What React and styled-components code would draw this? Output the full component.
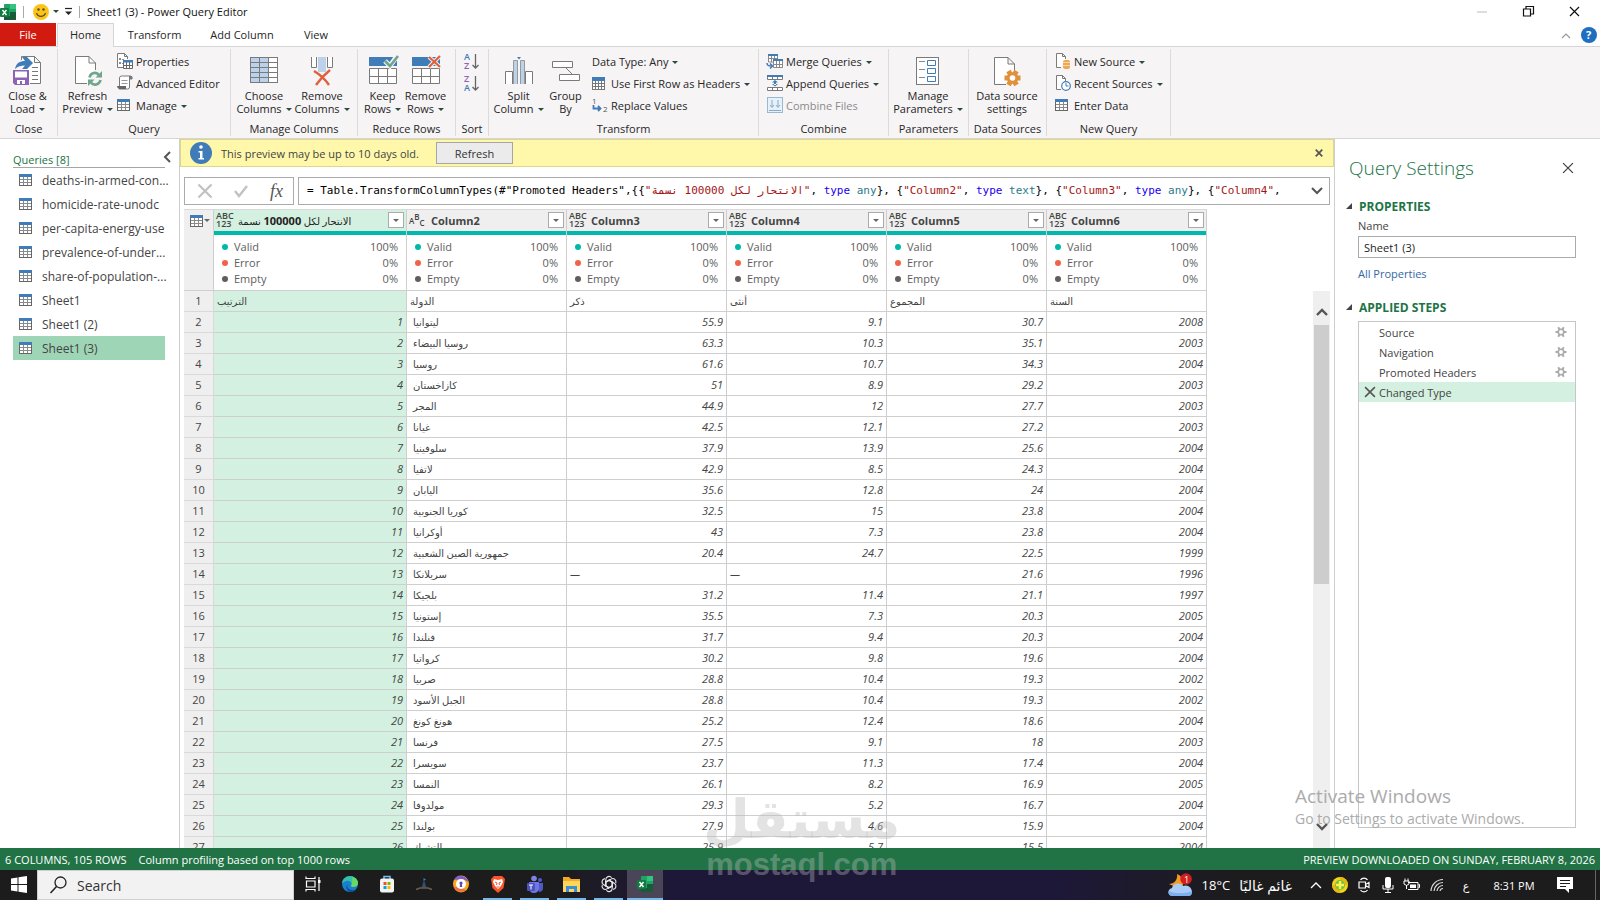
import React from "react";
import styled, { createGlobalStyle, css } from "styled-components";

const Global = createGlobalStyle`
  *, *::before, *::after { box-sizing: border-box; }
  body { margin: 0; }
  body, button, input, table {
    font-family: "Open Sans", "Noto Sans", "DejaVu Sans", sans-serif;
    font-size: 11px;
    color: #262626;
  }
  button { border: 0; padding: 0; background: none; cursor: pointer; white-space: nowrap; }
  svg { display: block; flex: none; overflow: visible; }
  ul, ol { list-style: none; margin: 0; padding: 0; }
`;

/* ---------- frame ---------- */
const Screen = styled.div`
  height: 100vh;
  display: flex;
  flex-direction: column;
  overflow: hidden;
  background: #fff;
`;
const TitleBar = styled.header`
  height: 23px;
  flex: none;
  display: flex;
  align-items: center;
`;
const AppTitle = styled.h1`
  margin: 0;
  padding-left: 7px;
  font-size: 11px;
  font-weight: 400;
  color: #111;
`;
const TitleRule = styled.span`
  width: 1px;
  height: 12px;
  background: #a8a8a8;
  margin: 0 ${(p) => p.$right || 0}px 0 ${(p) => p.$left || 0}px;
`;
const WindowButtons = styled.div`
  margin-left: auto;
  padding-right: 3px;
  display: flex;
`;
const WindowButton = styled.button`
  width: 46px;
  height: 21px;
  display: grid;
  place-items: center;
`;

/* ---------- ribbon ---------- */
const Tabs = styled.nav`
  height: 24px;
  flex: none;
  display: flex;
  margin-bottom: -1px;
  z-index: 1;
`;
const Tab = styled.button`
  width: ${(p) => p.$width}px;
  height: 23px;
  font-size: 11px;
  ${(p) => p.$kind === "file" && css`background: #d11a10; color: #fff; margin-right: 1px;`}
  ${(p) => p.$kind === "active" && css`
    height: 24px;
    padding-bottom: 2px;
    background: #f6f4f5;
    border: 1px solid #d6d4d5;
    border-bottom: 0;
  `}
`;
const TabTools = styled.div`
  margin-left: auto;
  padding-right: 3px;
  display: flex;
  align-items: center;
  gap: 10px;
`;
const Ribbon = styled.section`
  height: 93px;
  flex: none;
  display: flex;
  padding-top: 2px;
  background: #f6f4f5;
  border-top: 1px solid #d6d4d5;
  border-bottom: 1px solid #d6d4d5;
`;
const GroupBox = styled.div`
  width: ${(p) => p.$width}px;
  height: 87px;
  flex: none;
  display: flex;
  flex-direction: column;
  border-right: 1px solid #dcdadb;
`;
const GroupBody = styled.div`
  height: 71px;
  flex: none;
  display: flex;
  padding-left: ${(p) => p.$pad || 0}px;
`;
const GroupLabel = styled.div`
  line-height: 17px;
  text-align: center;
  white-space: nowrap;
`;
const BigButton = styled.button`
  width: ${(p) => p.$width}px;
  padding-top: 5px;
  display: flex;
  flex-direction: column;
  align-items: center;
  gap: 3px;
  line-height: 13px;
`;
const SmallColumn = styled.div`
  display: flex;
  flex-direction: column;
  padding: 1px 0 0 3px;
`;
const SmallButton = styled.button`
  height: 22px;
  display: flex;
  align-items: center;
  gap: 3px;
  color: ${(p) => (p.disabled ? "#8c8a8b" : "#262626")};
`;
const Slot = styled.span`
  width: ${(p) => p.$width || 16}px;
`;
const Caret = styled.span`
  display: inline-block;
  vertical-align: middle;
  margin: 0 0 1px 4px;
  border: 3px solid transparent;
  border-top-color: #2b4a43;
  border-bottom: 0;
`;

/* ---------- panes ---------- */
const Workspace = styled.div`
  flex: 1;
  min-height: 0;
  display: flex;
`;
const QueriesPane = styled.aside`
  width: 180px;
  flex: none;
  padding: 10px 14px 0 13px;
  border-right: 1px solid #cfcfcf;
`;
const QueriesHead = styled.div`
  height: 19px;
  display: flex;
  justify-content: space-between;
  border-bottom: 1px solid #a6a6a6;
  color: #217346;
  line-height: 21px;
`;
const CollapseButton = styled.button`
  height: 16px;
  margin-right: -6px;
`;
const QueryItem = styled.button`
  width: 100%;
  height: 24px;
  padding-left: 6px;
  display: flex;
  align-items: center;
  gap: 10px;
  color: #444;
  font-size: 12px;
  background: ${(p) => (p.$active ? "#9fd5b7" : "transparent")};
`;
const Center = styled.main`
  flex: 1;
  min-width: 0;
  display: flex;
  flex-direction: column;
`;
const Banner = styled.div`
  height: 28px;
  flex: none;
  display: flex;
  align-items: center;
  padding: 0 10px 0 9px;
  background: #fff8ab;
  border: 1px solid #dbd78e;
  color: #444;
  white-space: nowrap;
`;
const BannerText = styled.span`
  min-width: 206px;
  margin: 0 9px;
`;
const RefreshButton = styled.button`
  width: 77px;
  height: 22px;
  background: #ebebeb;
  border: 1px solid #a6a6a6;
  color: #333;
`;
const BannerClose = styled.button`
  margin-left: auto;
`;
const FormulaRow = styled.div`
  flex: none;
  display: flex;
  gap: 4px;
  padding: 10px 4px 4px 4px;
`;
const FormulaTools = styled.div`
  width: 110px;
  height: 28px;
  display: flex;
  align-items: center;
  justify-content: space-between;
  padding: 0 10px 0 12px;
  border: 1px solid #ababab;
`;
const FxButton = styled.button`
  font: italic 18px/20px "Liberation Serif", serif;
  color: #555;
`;
const FormulaBox = styled.div`
  flex: 1;
  min-width: 0;
  height: 28px;
  display: flex;
  align-items: center;
  justify-content: space-between;
  padding: 0 6px 0 8px;
  border: 1px solid #ababab;
`;
const Code = styled.code`
  font: 11px/18px "DejaVu Sans Mono", "Liberation Mono", monospace;
  color: #000;
  white-space: pre;
  overflow: hidden;
`;
const Token = styled.span`
  color: ${(p) => ({ str: "#a31515", key: "#1a00f0", type: "#2b7a8c" })[p.$kind]};
`;

/* ---------- data grid ---------- */
const GridArea = styled.div`
  flex: 1;
  min-height: 0;
  display: flex;
  justify-content: space-between;
  padding: 0 4px;
`;
const GridClip = styled.div`
  overflow: hidden;
`;
const Grid = styled.table`
  width: 1023px;
  table-layout: fixed;
  border-collapse: separate;
  border-spacing: 0;
  color: #444;
`;
const HeadCell = styled.th`
  height: 22px;
  padding: 0;
  background: ${(p) => (p.$selected ? "#d4f0e1" : "#efefef")};
  border-top: 1px solid #d9d9d9;
  border-right: 1px solid #cfcfcf;
`;
const HeadInner = styled.div`
  display: flex;
  align-items: center;
  height: 21px;
  padding: 0 2px ${(p) => (p.$corner ? 0 : 1)}px ${(p) => (p.$corner ? 5 : 2)}px;
  gap: ${(p) => (p.$corner ? 1 : 5)}px;
  font-weight: 700;
  white-space: nowrap;
`;
const TypeTag = styled.span`
  width: 17px;
  flex: none;
  font-size: 9px;
  line-height: 8px;
  font-weight: 600;
  text-align: left;
`;
const TextTag = styled(TypeTag)`
  display: flex;
  font-size: 8px;
`;
const Letter = styled.span`
  padding: ${(p) => p.$drop}px 0 ${(p) => 8 - p.$drop}px;
`;
const ArabicTitle = styled.bdi`
  font-size: 10px;
  font-weight: 400;
  color: #222;
  b { font-size: 11px; }
`;
const FilterButton = styled.button`
  width: 16px;
  height: 16px;
  margin-left: auto;
  display: grid;
  place-items: center;
  background: #fff;
  border: 1px solid #ababab;
`;
const FilterCaret = styled.span`
  border: 3px solid transparent;
  border-top-color: #666;
  border-bottom: 0;
`;
const ProfileCell = styled.td`
  height: 60px;
  padding: 0;
  vertical-align: top;
  background: ${(p) => (p.$corner ? "#efefef" : "#fff")};
  border-right: 1px solid #cfcfcf;
  border-bottom: 1px solid #cfcfcf;
`;
const QualityBar = styled.div`
  height: 4px;
  background: #01b8aa;
`;
const Stats = styled.dl`
  margin: 0;
  padding: 4px 8px 0 8px;
`;
const Stat = styled.div`
  height: 16px;
  display: flex;
  align-items: center;
  line-height: 16px;
  color: #605e5c;
`;
const Dot = styled.span`
  width: 6px;
  height: 6px;
  border-radius: 50%;
  margin-right: 6px;
  background: ${(p) => p.$color};
`;
const StatName = styled.dt``;
const StatValue = styled.dd`
  margin: 0 0 0 auto;
`;
const RowNumber = styled.th`
  height: 21px;
  padding: 0;
  line-height: 20px;
  font-weight: 400;
  text-align: center;
  background: #efefef;
  border-right: 1px solid #d9d9d9;
  border-bottom: 1px solid #d9d9d9;
`;
const Cell = styled.td`
  height: 21px;
  line-height: 20px;
  padding: 0 3px 0 ${(p) => (p.$indent ? 6 : 3)}px;
  text-align: ${(p) => (p.$num ? "right" : "left")};
  font-style: ${(p) => (p.$num ? "italic" : "normal")};
  font-size: ${(p) => (p.$num ? 11 : 10)}px;
  background: ${(p) => (p.$selected ? "#d4f0e1" : "#fff")};
  border-right: 1px solid #cfcfcf;
  border-bottom: 1px solid #cfcfcf;
  white-space: nowrap;
`;
const Scroll = styled.div`
  width: 17px;
  margin-top: 82px;
  display: flex;
  flex-direction: column;
  align-items: center;
  background: #efefef;
`;
const ScrollButton = styled.button`
  height: 34px;
  padding: ${(p) => (p.$down ? "0 0 8px" : "8px 0 0")};
  display: grid;
  place-items: center;
`;
const Track = styled.div`
  flex: 1;
  width: 15px;
`;
const Thumb = styled.div`
  height: 53%;
  background: #cdcdcd;
`;

/* ---------- settings ---------- */
const Settings = styled.aside`
  width: 266px;
  flex: none;
  display: flex;
  flex-direction: column;
  padding: 15px 24px 20px 11px;
  border-left: 1px solid #cfcfcf;
`;
const SettingsHead = styled.div`
  display: flex;
  align-items: center;
  justify-content: space-between;
  padding: 0 2px 0 3px;
  height: 28px;
`;
const SettingsTitle = styled.h2`
  margin: 0;
  font-size: 19px;
  font-weight: 300;
  color: #217346;
`;
const SectionHead = styled.h3`
  margin: ${(p) => p.$top}px 0 0;
  height: 20px;
  display: flex;
  align-items: center;
  gap: 7px;
  font-size: 12px;
  font-weight: 700;
  color: #217346;
`;
const SectionBody = styled.div`
  margin-left: 12px;
  display: flex;
  flex-direction: column;
  align-items: flex-start;
  flex: ${(p) => (p.$grow ? 1 : "none")};
`;
const FieldLabel = styled.label`
  height: 20px;
  line-height: 20px;
  color: #444;
`;
const NameInput = styled.input`
  width: 100%;
  height: 22px;
  padding: 0 5px;
  border: 1px solid #ababab;
  color: #222;
`;
const PropsLink = styled.a`
  margin-top: 6px;
  line-height: 20px;
  color: #3467a5;
  text-decoration: none;
`;
const Steps = styled.ol`
  width: 100%;
  flex: 1;
  margin-top: 4px;
  border: 1px solid #c6c6c6;
`;
const Step = styled.li`
  height: 20px;
  display: flex;
  align-items: center;
  padding: 0 8px 0 5px;
  color: #444;
  background: ${(p) => (p.$active ? "#d4f0e1" : "transparent")};
`;
const StepMark = styled.span`
  width: 15px;
`;
const StepGear = styled.button`
  margin-left: auto;
`;

/* ---------- status and task bars ---------- */
const StatusBar = styled.footer`
  height: 22px;
  flex: none;
  display: flex;
  align-items: center;
  gap: 12px;
  padding: 0 5px;
  background: #217346;
  color: #fff;
  white-space: nowrap;
`;
const StatusEnd = styled.span`
  margin-left: auto;
`;
const TaskBar = styled.nav`
  height: 30px;
  flex: none;
  display: flex;
  align-items: stretch;
  background: linear-gradient(90deg, #1c1c1c 0 34%, #1d1a28 38%, #1e1838 42% 66%, #1c1b22 75%, #1c1c1c 78%);
  color: #fff;
`;
const TaskButton = styled.button`
  width: ${(p) => p.$width || 29}px;
  margin: 0 ${(p) => (p.$width ? 0 : 4)}px;
  display: grid;
  place-items: center;
  border-bottom: 2px solid ${(p) => (p.$open ? "#76b9ed" : "transparent")};
  background: ${(p) => (p.$active ? "#4a4658" : "transparent")};
  background-clip: padding-box;
`;
const SearchBox = styled.label`
  width: 257px;
  display: flex;
  align-items: center;
  gap: 10px;
  padding-left: 12px;
  background: #f2f2f2;
  border: 1px solid #cfcfcf;
`;
const SearchInput = styled.input`
  width: 180px;
  border: 0;
  padding: 0;
  background: none;
  font-size: 14px;
  &::placeholder { color: #333; opacity: 1; }
`;
const Tray = styled.div`
  margin-left: auto;
  display: flex;
  align-items: center;
`;
const Weather = styled.button`
  display: flex;
  align-items: center;
  gap: 9px;
  margin-right: 12px;
  color: #fff;
  font-size: 13px;
`;
const WeatherText = styled.bdi`
  font-size: 14px;
`;
const TrayItem = styled.button`
  width: ${(p) => p.$width || 24}px;
  height: 30px;
  display: grid;
  place-items: center;
  color: #fff;
`;
const ShowDesktop = styled.span`
  width: 5px;
  height: 30px;
  margin-left: 12px;
  border-left: 1px solid #666;
`;

/* ---------- overlays ---------- */
const Activate = styled.div`
  position: absolute;
  right: 0;
  bottom: 71px;
  width: 305px;
  color: #ababab;
  font-size: 14px;
  line-height: 20px;
  pointer-events: none;
`;
const ActivateTitle = styled.div`
  font-size: 19px;
  line-height: 25px;
`;
const Mark = styled.div`
  position: absolute;
  left: 703px;
  bottom: 18px;
  color: rgba(185, 185, 185, 0.4);
  font: 700 31px/34px "Liberation Sans", sans-serif;
  text-align: center;
  pointer-events: none;
`;
const MarkArabic = styled.div`
  font: 700 54px/56px "DejaVu Sans", sans-serif;
`;

/* ---------- icons ---------- */
const BLUE = "#3f7cb8";
const GREY = "#7a7a7a";

const TableIcon = ({ w = 13, h = 12 }) => (
  <svg width={w} height={h} viewBox="0 0 13 12" shapeRendering="crispEdges">
    <rect x="0" y="0" width="13" height="12" fill="#fff" />
    <path d="M0.5 3v8.5h12V3M4.5 3v8M8.5 3v8M1 5.5h11M1 8.5h11" stroke="#8a8a8a" fill="none" />
    <path d="M0.5 3v8.5h12V3" stroke="#666" fill="none" />
    <rect width="13" height="3" fill={BLUE} />
  </svg>
);
const CloseLoadIcon = () => (
  <svg width="30" height="32" viewBox="0 0 30 32">
    <path d="M9 3h12.500v6.500H28V29H9z" fill="#fff" />
    <path d="M8.500 6V2.500h13l6 6v21H17M21.500 2.500v6h6M19 13.500h6M19 17.500h6M19 21.500h6M19 25.500h6" stroke={GREY} fill="none" />
    <path d="M2 15c1-6 5-8 10-8L9 3h5l6 6-6 6H9l3-3.500c-4 0-7 .500-10 3.500z" fill={BLUE} />
    <path d="M0 16h16v15H2l-2-2z" fill="#8e63b3" />
    <path d="M2 17.500h12v6H2zM4 26h8v4h-3v-3H7v3H4z" fill="#fff" />
  </svg>
);
const RefreshIcon = () => (
  <svg width="28" height="32" viewBox="0 0 28 32">
    <path d="M13 29.500H1.500V2.500H15l6.500 6.500v7" stroke={GREY} fill="#fff" />
    <path d="M15 2.500V9h6.500" stroke={GREY} fill="none" />
    <g fill="none" stroke="#6fa58c" strokeWidth="2.600">
      <path d="M15.500 23.500c1-5 7-6 9.500-2.500M26.500 26c-1 5-7 6-9.500 2.500" />
    </g>
    <path d="M28 17v6.500h-6.500zM14 32v-6.500h6.500z" fill="#6fa58c" />
  </svg>
);
const PropsIcon = () => (
  <svg width="16" height="16" viewBox="0 0 16 16">
    <path d="M6 14.500H.5V.500h7l3 3V6M7.500.500v3h3" stroke={GREY} fill="#fff" />
    <path d="M2 5h2v2H2zM2 9h2v2H2z" fill="#888" /><path d="M5 6.500h2M5 10.500h1" stroke="#888" />
    <rect x="6" y="7" width="10" height="9" fill="#fff" />
    <path d="M6.500 8v7.500h9V8M9.500 9v6M12.500 9v6M7 12.500h9" stroke="#666" fill="none" />
    <rect x="6" y="7" width="10" height="2.500" fill={BLUE} />
  </svg>
);
const ScrollIcon = () => (
  <svg width="16" height="16" viewBox="0 0 16 16">
    <path d="M2.500 11V3q0-2 2-2h9q2 0 1.500 3h-2.500v8q0 2-2 2H2" stroke={GREY} fill="#fff" />
    <path d="M4.500 5.500h6M4.500 8.500h6" stroke="#999" /><path d="M0 11h9v3H2q-2-1-2-3z" fill="#666" /><path d="M12 1h2.500q1.500 1 .500 3H12z" fill="#777" />
  </svg>
);
const ChooseColumnsIcon = () => (
  <svg width="28" height="32" viewBox="0 0 28 32" shapeRendering="crispEdges">
    <rect x="0" y="3" width="28" height="26" fill="#fff" />
    <rect x="0" y="3" width="19" height="26" fill="#bcd2ea" />
    <path d="M.5 3.500h27v25H.5zM9.500 4v24M18.500 4v24M1 8.500h26M1 13.500h26M1 18.500h26M1 23.500h26" stroke={GREY} fill="none" />
  </svg>
);
const RemoveColumnsIcon = () => (
  <svg width="24" height="32" viewBox="0 0 24 32">
    <rect x="8" y="3" width="8" height="15" fill="#bcd2ea" />
    <path d="M1.500 3v10.500h5V3M22.500 3v10.500h-5V3" stroke={GREY} fill="#fff" />
    <path d="M4 17c5 3 11 8 15 14M20 16c-5 4-9 8-14 15" stroke="#e0603c" strokeWidth="2.400" fill="none" />
  </svg>
);
const RowsIcon = ({ remove }) => (
  <svg width="28" height="32" viewBox="0 0 28 32">
    <rect x="0" y="3" width="28" height="9" fill={BLUE} />
    <path d="M.5 14.500h27v15H.5zM9.500 15v14M18.500 15v14M1 22.500h26" stroke={GREY} fill="#fff" />
    {remove ? (
      <>
        <path d="M17 3l11 10M28 2L17 13" stroke="#f6f4f5" strokeWidth="4" fill="none" />
        <path d="M17 3l11 10M28 2L17 13" stroke="#e0603c" strokeWidth="2.200" fill="none" />
      </>
    ) : (
      <>
        <path d="M16 7l5 5 7-10" stroke="#f6f4f5" strokeWidth="5" fill="none" />
        <path d="M16 7l5 5 8-10" stroke="#6fa58c" strokeWidth="2.600" fill="none" />
      </>
    )}
  </svg>
);
const SortIcon = ({ top, bottom, topColor, bottomColor }) => (
  <svg width="16" height="18" viewBox="0 0 16 18">
    <text x="0" y="8" fontSize="9" fontWeight="600" fill={topColor}>{top}</text>
    <text x="0" y="17" fontSize="9" fontWeight="600" fill={bottomColor}>{bottom}</text>
    <path d="M11.500 2v14M8.500 13l3 3 3-3" stroke="#666" strokeWidth="1.300" fill="none" />
  </svg>
);
const SplitIcon = () => (
  <svg width="28" height="32" viewBox="0 0 28 32">
    <path d="M.5 30V17.500h7V30M20.500 30V17.500h7V30" stroke={GREY} fill="#fff" />
    <path d="M8.500 30V6.500h4V30M15.500 30V6.500h4V30" stroke="#999" fill="#bcd2ea" />
    <path d="M12 3h4l-2 2.500z" fill={BLUE} />
  </svg>
);
const GroupByIcon = () => (
  <svg width="28" height="32" viewBox="0 0 28 32">
    <path d="M.5 7.500h20v6H.5zM7.500 20.500h20v6h-20z" stroke={GREY} fill="#fff" />
    <path d="M14 14l6 6" stroke={GREY} />
  </svg>
);
const HeadersIcon = () => (
  <svg width="13" height="13" viewBox="0 0 13 13" shapeRendering="crispEdges">
    <rect width="13" height="13" fill="#fff" />
    <path d="M.5.500h12v12H.5zM3.500 1v12M6.500 1v12M9.500 1v12M0 6.500h13M0 9.500h13" stroke="#777" fill="none" />
    <rect width="13" height="4" fill={BLUE} />
  </svg>
);
const ReplaceIcon = () => (
  <svg width="16" height="16" viewBox="0 0 16 16">
    <text x="0" y="7" fontSize="8" fill="#555">1</text>
    <text x="11" y="15" fontSize="8" fill="#555">2</text>
    <path d="M1.500 8v3.500H8M6 9l2.500 2.500L6 14" stroke={BLUE} strokeWidth="1.800" fill="none" />
  </svg>
);
const MergeIcon = () => (
  <svg width="16" height="16" viewBox="0 0 16 16">
    <path d="M1.500 2v7h9V2M4.500 3v6M7.500 3v6M2 5.500h9" stroke="#888" fill="#fff" /><rect x="1" y="1" width="10" height="2" fill={BLUE} />
    <path d="M6.500 7v7.500h9V7M9.500 8v6M12.500 8v6M7 11.500h9" stroke="#888" fill="#fff" /><rect x="6" y="6" width="10" height="2" fill={BLUE} />
    <path d="M0 10c0 3 2 3 5 3M3 10.500L5.500 13 3 15.500" stroke={BLUE} strokeWidth="1.500" fill="none" />
  </svg>
);
const AppendIcon = () => (
  <svg width="16" height="16" viewBox="0 0 16 16">
    <path d="M.5 1v3.500h15V1M.5 12.500h15v3H.5zM5.500 2v2M10.500 2v2M5.500 13v2M10.500 13v2" stroke={GREY} fill="#fff" />
    <rect width="16" height="2" fill={BLUE} /><path d="M5 7.500L8 5l3 2.500zM5 9l3 2.500L11 9zM7 7h2v3H7z" fill={BLUE} />
  </svg>
);
const CombineIcon = () => (
  <svg width="16" height="16" viewBox="0 0 16 16">
    <rect x=".5" y=".5" width="15" height="15" fill="#e6f1fa" stroke="#9bb8d3" />
    <path d="M5 3v7M3 8l2 2.500L7 8M11 3v7M9 8l2 2.500L13 8M2 13.500h12" stroke="#8aa9c8" fill="none" />
  </svg>
);
const ParamsIcon = () => (
  <svg width="24" height="32" viewBox="0 0 24 32">
    <rect x="0.500" y="3.500" width="22" height="27" fill="#fff" stroke={GREY} />
    <path d="M3 7.500h6M3 15.500h6M3 23.500h6" stroke="#888" />
    <path d="M11.500 6.500h8v5h-8zM11.500 14.500h8v5h-8zM11.500 22.500h8v5h-8z" stroke={BLUE} fill="#fff" />
  </svg>
);
const SourceSettingsIcon = () => (
  <svg width="28" height="32" viewBox="0 0 28 32">
    <path d="M13 30.500H1.500v-27H15l6.500 6.500v7M15 3.500V10h6.500" stroke={GREY} fill="#fff" />
    <g transform="translate(19.500 24)">
      {[0, 60, 120].map((a) => <rect key={a} x="-2.500" y="-8" width="5" height="16" fill="#e0913c" transform={`rotate(${a + 30})`} />)}
      <circle r="5.800" fill="#e0913c" /><circle r="2.800" fill="#fff" />
    </g>
  </svg>
);
const SourceIcon = ({ clock }) => (
  <svg width="16" height="16" viewBox="0 0 16 16">
    <path d="M6 14.500H1.500V.500h6l3 3V6M7.500.500v3h3" stroke={GREY} fill="#fff" />
    {clock ? (
      <g><circle cx="11" cy="11" r="4.300" fill="#fff" stroke={BLUE} strokeWidth="1.200" /><path d="M11 8v3h2.500" stroke={BLUE} fill="none" /></g>
    ) : (
      <g><rect x="8" y="7" width="7" height="9" rx="2" fill="#f0a850" /><path d="M8 9.500h7M8 12.500h7" stroke="#fbd9a8" /></g>
    )}
  </svg>
);
const Gear = () => (
  <svg width="12" height="12" viewBox="-6 -6 12 12">
    {[0, 60, 120].map((a) => <rect key={a} x="-1" y="-5.500" width="2" height="11" fill="#aaa" transform={`rotate(${a + 30})`} />)}
    <circle r="2.800" fill="#fff" stroke="#aaa" strokeWidth="1.600" />
  </svg>
);
const Chevron = ({ d, w = 12, h = 8, color = "#555", sw = 2 }) => (
  <svg width={w} height={h} viewBox={`0 0 ${w} ${h}`}><path d={d} stroke={color} strokeWidth={sw} fill="none" /></svg>
);
const Cross = ({ s = 11, sw = 1.2, color = "#444" }) => (
  <svg width={s} height={s} viewBox="0 0 11 11"><path d="M1 1l9 9M10 1l-9 9" stroke={color} strokeWidth={sw} fill="none" /></svg>
);
const ExcelIcon = () => (
  <svg width="16" height="16" viewBox="0 0 16 16">
    <rect x="4" y="0" width="12" height="16" rx="1" fill="#21a366" /><path d="M10 0h6v5h-6z" fill="#33c481" /><path d="M10 8h6v8H4v-4h6z" fill="#185c37" />
    <rect x="0" y="4" width="9" height="9" rx="1" fill="#107c41" />
    <path d="M2.500 6l4 5M6.500 6l-4 5" stroke="#fff" strokeWidth="1.400" />
  </svg>
);
const Smiley = () => (
  <svg width="16" height="16" viewBox="0 0 16 16">
    <circle cx="8" cy="8" r="8" fill="#fcc419" /><circle cx="5.500" cy="5.500" r="1.200" fill="#5b4a2a" /><circle cx="10.500" cy="5.500" r="1.200" fill="#5b4a2a" />
    <path d="M3.500 9c1.500 4.500 7.500 4.500 9 0" stroke="#5b4a2a" strokeWidth="1.200" fill="none" />
  </svg>
);

/* ---------- data ---------- */
const queries = ["deaths-in-armed-con...", "homicide-rate-unodc", "per-capita-energy-use", "prevalence-of-under...", "share-of-population-...", "Sheet1", "Sheet1 (2)", "Sheet1 (3)"];
const steps = ["Source", "Navigation", "Promoted Headers", "Changed Type"];
const columns = [
  { name: "الانتحار لكل 100000 نسمة", arabic: true },
  { name: "Column2", text: true },
  { name: "Column3" }, { name: "Column4" }, { name: "Column5" }, { name: "Column6" },
];
const stats = [["Valid", "100%", "#01b8aa"], ["Error", "0%", "#f2624b"], ["Empty", "0%", "#605e5c"]];
const rows = [
  ["ليتوانيا", "55.9", "9.1", "30.7", "2008"],
  ["روسيا البيضاء", "63.3", "10.3", "35.1", "2003"],
  ["روسيا", "61.6", "10.7", "34.3", "2004"],
  ["كازاخستان", "51", "8.9", "29.2", "2003"],
  ["المجر", "44.9", "12", "27.7", "2003"],
  ["غيانا", "42.5", "12.1", "27.2", "2003"],
  ["سلوفينيا", "37.9", "13.9", "25.6", "2004"],
  ["لاتفيا", "42.9", "8.5", "24.3", "2004"],
  ["اليابان", "35.6", "12.8", "24", "2004"],
  ["كوريا الجنوبية", "32.5", "15", "23.8", "2004"],
  ["أوكرانيا", "43", "7.3", "23.8", "2004"],
  ["جمهورية الصين الشعبية", "20.4", "24.7", "22.5", "1999"],
  ["سريلانكا", "—", "—", "21.6", "1996"],
  ["بلجيكا", "31.2", "11.4", "21.1", "1997"],
  ["إستونيا", "35.5", "7.3", "20.3", "2005"],
  ["فنلندا", "31.7", "9.4", "20.3", "2004"],
  ["كرواتيا", "30.2", "9.8", "19.6", "2004"],
  ["صربيا", "28.8", "10.4", "19.3", "2002"],
  ["الجبل الأسود", "28.8", "10.4", "19.3", "2002"],
  ["هونغ كونغ", "25.2", "12.4", "18.6", "2004"],
  ["فرنسا", "27.5", "9.1", "18", "2003"],
  ["سويسرا", "23.7", "11.3", "17.4", "2004"],
  ["النمسا", "26.1", "8.2", "16.9", "2005"],
  ["مولدوفا", "29.3", "5.2", "16.7", "2004"],
  ["بولندا", "27.9", "4.6", "15.9", "2004"],
  ["التشيك", "25.9", "5.7", "15.5", "2004"],
];
const formula = [
  ["", '= Table.TransformColumnTypes(#"Promoted Headers",{{'],
  ["str", '"'], ["arabic", "الانتحار لكل 100000 نسمة"], ["str", '"'], ["", ", "], ["key", "type"], ["type", " any"], ["", "}, {"],
  ["str", '"Column2"'], ["", ", "], ["key", "type"], ["type", " text"], ["", "}, {"],
  ["str", '"Column3"'], ["", ", "], ["key", "type"], ["type", " any"], ["", "}, {"],
  ["str", '"Column4"'], ["", ","],
];

/* ---------- parts ---------- */
const Group = ({ label, width, pad, children }) => (
  <GroupBox $width={width}>
    <GroupBody $pad={pad}>{children}</GroupBody>
    <GroupLabel>{label}</GroupLabel>
  </GroupBox>
);
const Big = ({ icon, width, lines, menu }) => (
  <BigButton $width={width}>
    {icon}
    <span>{lines[0]}<br />{lines[1]}{menu && <Caret />}</span>
  </BigButton>
);
const Small = ({ icon, children, menu, disabled }) => (
  <SmallButton disabled={disabled}>
    {icon && <Slot>{icon}</Slot>}
    <span>{children}{menu && <Caret />}</span>
  </SmallButton>
);

const RibbonBar = () => (
  <Ribbon>
    <Group label="Close" width={58}>
      <Big width={55} icon={<CloseLoadIcon />} lines={["Close &", "Load"]} menu />
    </Group>
    <Group label="Query" width={173} pad={3}>
      <Big width={53} icon={<RefreshIcon />} lines={["Refresh", "Preview"]} menu />
      <SmallColumn>
        <Small icon={<PropsIcon />}>Properties</Small>
        <Small icon={<ScrollIcon />}>Advanced Editor</Small>
        <Small icon={<TableIcon />} menu>Manage</Small>
      </SmallColumn>
    </Group>
    <Group label="Manage Columns" width={127} pad={4}>
      <Big width={58} icon={<ChooseColumnsIcon />} lines={["Choose", "Columns"]} menu />
      <Big width={58} icon={<RemoveColumnsIcon />} lines={["Remove", "Columns"]} menu />
    </Group>
    <Group label="Reduce Rows" width={98} pad={3}>
      <Big width={43} icon={<RowsIcon />} lines={["Keep", "Rows"]} menu />
      <Big width={43} icon={<RowsIcon remove />} lines={["Remove", "Rows"]} menu />
    </Group>
    <Group label="Sort" width={33} pad={5}>
      <SmallColumn>
        <SmallButton aria-label="Sort ascending"><SortIcon top="A" bottom="Z" topColor={BLUE} bottomColor="#8e63b3" /></SmallButton>
        <SmallButton aria-label="Sort descending"><SortIcon top="Z" bottom="A" topColor="#8e63b3" bottomColor={BLUE} /></SmallButton>
      </SmallColumn>
    </Group>
    <Group label="Transform" width={270} pad={6}>
      <Big width={47} icon={<SplitIcon />} lines={["Split", "Column"]} menu />
      <Big width={47} icon={<GroupByIcon />} lines={["Group", "By"]} />
      <SmallColumn>
        <Small menu>Data Type: Any</Small>
        <Small icon={<HeadersIcon />} menu>Use First Row as Headers</Small>
        <Small icon={<ReplaceIcon />}>Replace Values</Small>
      </SmallColumn>
    </Group>
    <Group label="Combine" width={130} pad={5}>
      <SmallColumn>
        <Small icon={<MergeIcon />} menu>Merge Queries</Small>
        <Small icon={<AppendIcon />} menu>Append Queries</Small>
        <Small icon={<CombineIcon />} disabled>Combine Files</Small>
      </SmallColumn>
    </Group>
    <Group label="Parameters" width={80}>
      <Big width={78} icon={<ParamsIcon />} lines={["Manage", "Parameters"]} menu />
    </Group>
    <Group label="Data Sources" width={78}>
      <Big width={76} icon={<SourceSettingsIcon />} lines={["Data source", "settings"]} />
    </Group>
    <Group label="New Query" width={124} pad={5}>
      <SmallColumn>
        <Small icon={<SourceIcon />} menu>New Source</Small>
        <Small icon={<SourceIcon clock />} menu>Recent Sources</Small>
        <Small icon={<TableIcon />}>Enter Data</Small>
      </SmallColumn>
    </Group>
  </Ribbon>
);

const DataGrid = () => (
  <Grid>
    <colgroup>
      <col width="30" /><col width="193" />
      {columns.slice(1).map((c) => <col key={c.name} width="160" />)}
    </colgroup>
    <thead>
      <tr>
        <HeadCell><HeadInner $corner><TableIcon w={14} /><FilterCaret /></HeadInner></HeadCell>
        {columns.map((c) => (
          <HeadCell key={c.name} $selected={c.arabic} scope="col">
            <HeadInner>
              {c.text ? (
                <TextTag><Letter $drop={5}>A</Letter><Letter $drop={1}>B</Letter><Letter $drop={7}>C</Letter></TextTag>
              ) : (
                <TypeTag>ABC<br />123</TypeTag>
              )}
              {c.arabic ? <ArabicTitle dir="rtl">الانتحار لكل <b>100000</b> نسمة</ArabicTitle> : <span>{c.name}</span>}
              <FilterButton aria-label={`Filter ${c.name}`}><FilterCaret /></FilterButton>
            </HeadInner>
          </HeadCell>
        ))}
      </tr>
    </thead>
    <tbody>
      <tr>
        <ProfileCell $corner />
        {columns.map((c) => (
          <ProfileCell key={c.name}>
            <QualityBar />
            <Stats>
              {stats.map(([name, value, color]) => (
                <Stat key={name}><Dot $color={color} /><StatName>{name}</StatName><StatValue>{value}</StatValue></Stat>
              ))}
            </Stats>
          </ProfileCell>
        ))}
      </tr>
      <tr>
        <RowNumber scope="row">1</RowNumber>
        {["الترتيب", "الدولة", "ذكر", "أنثى", "المجموع", "السنة"].map((t, i) => (
          <Cell key={t} $selected={i === 0}><bdi>{t}</bdi></Cell>
        ))}
      </tr>
      {rows.map(([country, ...values], i) => (
        <tr key={country}>
          <RowNumber scope="row">{i + 2}</RowNumber>
          <Cell $num $selected>{i + 1}</Cell>
          <Cell $indent><bdi>{country}</bdi></Cell>
          {values.map((v, j) => <Cell key={j} $num={v !== "—"}>{v}</Cell>)}
        </tr>
      ))}
    </tbody>
  </Grid>
);

const EdgeIcon = () => (
  <svg width="16" height="16" viewBox="0 0 16 16">
    <circle cx="8" cy="8" r="8" fill="#1b7fd0" />
    <path d="M0 8C0 3 4 0 8 0s8 3 8 7c0 3-3 4-5 4-2 0-2-1-1.500-2C10 6 7 4 4 5S0 7 0 8z" fill="#35c1a8" />
    <path d="M10 1c4 1 6 4 6 6 0 3-3 4-5 4-2 0-2-1-1.500-2 1-3 1-6 .500-8z" fill="#6bd85f" />
    <path d="M5.500 8c-1 3 1 6 5 6 2 0 3-.500 4-1.500C13 15 10 16 8 16c-3-1-5-5-2.500-8z" fill="#0c4f9a" />
  </svg>
);
const StoreIcon = () => (
  <svg width="16" height="18" viewBox="0 0 16 18">
    <path d="M5 4V1.500h6V4" stroke="#6fc2f2" strokeWidth="1.500" fill="none" /><rect x="1" y="3.500" width="14" height="14" rx="2" fill="#f4f4f4" />
    <path d="M4.500 7h3v3h-3z" fill="#f25022" /><path d="M8.500 7h3v3h-3z" fill="#7fba00" /><path d="M4.500 11h3v3h-3z" fill="#00a4ef" /><path d="M8.500 11h3v3h-3z" fill="#ffb900" />
  </svg>
);
const TentIcon = () => (
  <svg width="18" height="16" viewBox="0 0 18 16">
    <path d="M9 4l2.500 7.500h-5z" fill="#2e4f72" /><path d="M8.500 2l2.500 1.500L8.500 5z" fill="#3b7fc0" /><path d="M1 13.500l4-1.500h8l4 1.500" stroke="#6a604a" strokeWidth="1.500" fill="none" />
  </svg>
);
const LockBrowserIcon = () => (
  <svg width="16" height="18" viewBox="0 0 16 18">
    <ellipse cx="8" cy="9" rx="8" ry="8.500" fill="#f5a623" /><path d="M1 5C3 0 13-1 15.500 7L10 4z" fill="#7b5cd6" /><path d="M1 12c2 5 8 6 12 3L6 12z" fill="#f36c3d" />
    <circle cx="8" cy="9" r="5" fill="#fff" /><circle cx="8" cy="8" r="1.600" fill="#5a4bb0" /><path d="M7.300 8h1.400l.600 4H6.700z" fill="#5a4bb0" />
  </svg>
);
const BraveIcon = () => (
  <svg width="16" height="18" viewBox="0 0 16 18">
    <path d="M4 1h8l3 3-1.500 9L8 18l-5.500-5L1 4z" fill="#fb542b" />
    <path d="M4 4l4 1 4-1 1 3-2 4-3 3-3-3-2-4z" fill="#fff" /><path d="M5 7l2 1-.500 2M11 7L9 8l.500 2M6.500 12h3" stroke="#fb542b" fill="none" />
  </svg>
);
const TeamsIcon = () => (
  <svg width="16" height="18" viewBox="0 0 16 18">
    <circle cx="7" cy="3.500" r="2.800" fill="#7b83eb" /><circle cx="13" cy="5" r="2" fill="#5059c9" />
    <path d="M10 8h6v6q-1 3-4 3z" fill="#5059c9" /><path d="M2 7h10v7q-1 4-5 4t-5-4z" fill="#6f78e0" />
    <rect x="0" y="8" width="8" height="8" rx="1" fill="#4b53bc" /><path d="M2 10h4M4 10v4.500" stroke="#fff" />
  </svg>
);
const FolderIcon = () => (
  <svg width="17" height="16" viewBox="0 0 17 16">
    <path d="M0 1h6l2 2h9v13H0z" fill="#f9a825" /><path d="M0 5h17v11H0z" fill="#ffd65a" /><path d="M3 16v-6h11v6h-3v-3H6v3z" fill="#3b8fd8" />
  </svg>
);
const KnotIcon = () => (
  <svg width="18" height="18" viewBox="-9 -9 18 18">
    {[0, 60, 120, 180, 240, 300].map((a) => (
      <path key={a} transform={`rotate(${a})`} d="M-3.200 1.900V-4.200A3.200 3.200 0 0 1 2.600-6.200M-3.200-1.900L.200-3.800 4.600-1.300" stroke="#e8e8e8" strokeWidth="1.100" fill="none" />
    ))}
  </svg>
);
const WeatherIcon = () => (
  <svg width="25" height="24" viewBox="0 0 25 24">
    <path d="M1 11c5 0 9-4 8-10 7 3 9 10 3 15z" fill="#f59b23" />
    <path d="M5 23c-6 0-6-7-1-8 1-5 8-6 11-2 5-2 9 2 9 6 0 3-2 4-4 4z" fill="#a9cdf7" />
    <path d="M5 23c-4 0-5-3-4-5 5 3 17 3 23 0 0 4-2 5-4 5z" fill="#7db0ee" />
    <circle cx="18" cy="6" r="5.800" fill="#d02020" /><text x="16" y="9.500" fontSize="9" fill="#fff">1</text>
  </svg>
);

const Desktop = () => (
  <TaskBar>
    <TaskButton aria-label="Start">
      <svg width="16" height="17" viewBox="0 0 16 17"><path d="M0 2.500L6.500 1.500V8H0zM7.500 1.300L16 0v8H7.500zM0 9h6.500v6.500L0 14.500zM7.500 9H16v8l-8.500-1.300z" fill="#fff" /></svg>
    </TaskButton>
    <SearchBox>
      <svg width="17" height="18" viewBox="0 0 17 18"><circle cx="10.500" cy="6.500" r="5.500" stroke="#222" strokeWidth="1.300" fill="none" /><path d="M6.500 10.500L.5 17" stroke="#222" strokeWidth="1.500" /></svg>
      <SearchInput placeholder="Search" aria-label="Search" />
    </SearchBox>
    <TaskButton aria-label="Task view">
      <svg width="16" height="16" viewBox="0 0 16 16"><path d="M1 .500v2h9v-2M1.500 5h8.500v6H1.500zM1 15.500v-2h9v2M14 1v14" stroke="#fff" strokeWidth="1.200" fill="none" /><path d="M13 4h2.500v3H13z" fill="#fff" /></svg>
    </TaskButton>
    <TaskButton aria-label="Edge"><EdgeIcon /></TaskButton>
    <TaskButton aria-label="Store"><StoreIcon /></TaskButton>
    <TaskButton aria-label="Camp"><TentIcon /></TaskButton>
    <TaskButton aria-label="Browser"><LockBrowserIcon /></TaskButton>
    <TaskButton $open aria-label="Brave"><BraveIcon /></TaskButton>
    <TaskButton $open aria-label="Teams"><TeamsIcon /></TaskButton>
    <TaskButton $open aria-label="Explorer"><FolderIcon /></TaskButton>
    <TaskButton $open aria-label="Assistant"><KnotIcon /></TaskButton>
    <TaskButton $open $active $width={36} aria-label="Excel"><ExcelIcon /></TaskButton>
    <Tray>
      <Weather><WeatherIcon /><span>18°C</span><WeatherText dir="rtl">غائم غالبًا</WeatherText></Weather>
      <TrayItem aria-label="Hidden icons"><Chevron d="M1 7l5-5 5 5" color="#fff" sw={1.300} /></TrayItem>
      <TrayItem aria-label="Antivirus">
        <svg width="16" height="16" viewBox="0 0 16 16"><circle cx="8" cy="8" r="8" fill="#f7d417" /><path d="M8 0a8 8 0 0 1 8 8h-3a5 5 0 0 0-5-5zM8 16a8 8 0 0 1-8-8h3a5 5 0 0 0 5 5z" fill="#e8b80e" /><circle cx="8" cy="8" r="5" fill="#6cc04a" /><path d="M8 4v8M4 8h8" stroke="#fff04a" strokeWidth="2.500" /></svg>
      </TrayItem>
      <TrayItem aria-label="Camera">
        <svg width="12" height="16" viewBox="0 0 12 16"><path d="M2.500 3C4 .500 8 .500 9.500 3M2.500 13c1.500 2.500 5.500 2.500 7 0M1 5h6.500v6H1zM7.500 7.500L11 5.500v5L7.500 8.500" stroke="#fff" strokeWidth="1.200" fill="none" /></svg>
      </TrayItem>
      <TrayItem $width={23} aria-label="Microphone">
        <svg width="12" height="16" viewBox="0 0 12 16"><rect x="3" width="6" height="11" rx="2" fill="#fff" /><path d="M1 8v4h10V8M6 12v3.500M3 15.500h6" stroke="#fff" fill="none" /></svg>
      </TrayItem>
      <TrayItem aria-label="Battery">
        <svg width="17" height="14" viewBox="0 0 17 14"><path d="M5 4.500h10v7H5M15.500 6.500h1v3h-1M1 3h5v3q-2.500 3-5 0zM2 .500V3M5 .500V3M3.500 7v4" stroke="#fff" fill="none" /><rect x="7" y="6.500" width="6" height="3.500" fill="#fff" /></svg>
      </TrayItem>
      <TrayItem $width={28} aria-label="Network">
        <svg width="14" height="14" viewBox="0 0 14 14"><path d="M1 13A12 12 0 0 1 13 1.500M4 13a9 9 0 0 1 9-8.500M7 13a6 6 0 0 1 6-5.500M10 13a3 3 0 0 1 3-2.500" stroke="#ddd" strokeWidth="1.200" fill="none" /></svg>
      </TrayItem>
      <TrayItem $width={30}>ع</TrayItem>
      <TrayItem $width={66}>8:31 PM</TrayItem>
      <TrayItem $width={36} aria-label="Notifications">
        <svg width="16" height="16" viewBox="0 0 16 16"><path d="M0 0h16v12h-4v4l-4-4H0z" fill="#fff" /><path d="M3 3.500h10M3 6.500h10M3 9.500h6" stroke="#1c1c1c" /></svg>
      </TrayItem>
      <ShowDesktop />
    </Tray>
  </TaskBar>
);

export default function App() {
  return (
    <Screen>
      <Global />
      <TitleBar>
        <ExcelIcon />
        <TitleRule $left={7} $right={9} />
        <Smiley />
        <Caret />
        <Slot $width={24}>
          <svg width="24" height="8" viewBox="0 0 24 8"><path d="M6 .500h7" stroke="#222" strokeWidth="1.200" /><path d="M6 3.500h7L9.500 7z" fill="#222" /></svg>
        </Slot>
        <TitleRule $left={-4} />
        <AppTitle>Sheet1 (3) - Power Query Editor</AppTitle>
        <WindowButtons>
          <WindowButton aria-label="Minimize"><svg width="10" height="2"><path d="M0 1h10" stroke="#bbb" /></svg></WindowButton>
          <WindowButton aria-label="Restore"><svg width="11" height="11" viewBox="0 0 11 11"><path d="M.5 3h7v7h-7zM3 3V.500h7.500V8H8" stroke="#111" strokeWidth="1.200" fill="none" /></svg></WindowButton>
          <WindowButton aria-label="Close"><Cross color="#111" /></WindowButton>
        </WindowButtons>
      </TitleBar>
      <Tabs>
        <Tab $kind="file" $width={56}>File</Tab>
        <Tab $kind="active" $width={57}>Home</Tab>
        <Tab $width={81}>Transform</Tab>
        <Tab $width={94}>Add Column</Tab>
        <Tab $width={54}>View</Tab>
        <TabTools>
          <Chevron d="M1 6l4-4 4 4" w={10} h={7} color="#999" sw={1.200} />
          <svg width="16" height="16" viewBox="0 0 16 16"><circle cx="8" cy="8" r="8" fill="#1f6fc0" /><text x="5" y="12" fontSize="11" fontWeight="700" fill="#fff">?</text></svg>
        </TabTools>
      </Tabs>
      <RibbonBar />
      <Workspace>
        <QueriesPane>
          <QueriesHead>
            <span>Queries [8]</span>
            <CollapseButton aria-label="Collapse"><Chevron d="M7 1L2 6l5 5" w={8} h={12} /></CollapseButton>
          </QueriesHead>
          <ul>
            {queries.map((q, i) => (
              <li key={q}><QueryItem $active={i === 7}><TableIcon />{q}</QueryItem></li>
            ))}
          </ul>
        </QueriesPane>
        <Center>
          <Banner>
            <svg width="22" height="22" viewBox="0 0 22 22"><circle cx="11" cy="11" r="11" fill={BLUE} /><circle cx="11" cy="5" r="1.800" fill="#fff" /><path d="M8.500 9h4v7h1.500v1.500H8.500V16H10v-5.500H8.500z" fill="#fff" /></svg>
            <BannerText>This preview may be up to 10 days old.</BannerText>
            <RefreshButton>Refresh</RefreshButton>
            <BannerClose aria-label="Dismiss"><Cross s={8} sw={2.400} color="#555" /></BannerClose>
          </Banner>
          <FormulaRow>
            <FormulaTools>
              <button aria-label="Cancel"><Cross s={16} sw={1.600} color="#c2c2c2" /></button>
              <button aria-label="Commit"><Chevron d="M1 7l4 5 8-10" w={15} h={14} color="#c2c2c2" sw={2.400} /></button>
              <FxButton>fx</FxButton>
            </FormulaTools>
            <FormulaBox>
              <Code role="textbox" aria-label="Formula">
                {formula.map(([kind, text], i) => (
                  <Token key={i} $kind={kind === "arabic" ? "str" : kind}>{kind === "arabic" ? <bdi>{text}</bdi> : text}</Token>
                ))}
              </Code>
              <button aria-label="Expand formula"><Chevron d="M1 1l5 5 5-5" /></button>
            </FormulaBox>
          </FormulaRow>
          <GridArea>
            <GridClip><DataGrid /></GridClip>
            <Scroll>
              <ScrollButton aria-label="Scroll up"><Chevron d="M1 7l5-5 5 5" sw={2.400} /></ScrollButton>
              <Track><Thumb /></Track>
              <ScrollButton $down aria-label="Scroll down"><Chevron d="M1 1l5 5 5-5" sw={2.400} /></ScrollButton>
            </Scroll>
          </GridArea>
        </Center>
        <Settings>
          <SettingsHead>
            <SettingsTitle>Query Settings</SettingsTitle>
            <button aria-label="Close settings"><Cross s={12} /></button>
          </SettingsHead>
          <SectionHead $top={14}><svg width="6" height="6"><path d="M6 0v6H0z" fill="#444" /></svg>PROPERTIES</SectionHead>
          <SectionBody>
            <FieldLabel htmlFor="query-name">Name</FieldLabel>
            <NameInput id="query-name" defaultValue="Sheet1 (3)" />
            <PropsLink href="#properties">All Properties</PropsLink>
          </SectionBody>
          <SectionHead $top={13}><svg width="6" height="6"><path d="M6 0v6H0z" fill="#444" /></svg>APPLIED STEPS</SectionHead>
          <SectionBody $grow>
            <Steps>
              {steps.map((s, i) => (
                <Step key={s} $active={i === 3}>
                  <StepMark>{i === 3 && <Cross s={12} sw={1.400} color="#555" />}</StepMark>
                  {s}
                  {i < 3 && <StepGear aria-label={`Edit ${s}`}><Gear /></StepGear>}
                </Step>
              ))}
            </Steps>
          </SectionBody>
        </Settings>
      </Workspace>
      <StatusBar>
        <span>6 COLUMNS, 105 ROWS</span>
        <span>Column profiling based on top 1000 rows</span>
        <StatusEnd>PREVIEW DOWNLOADED ON SUNDAY, FEBRUARY 8, 2026</StatusEnd>
      </StatusBar>
      <Desktop />
      <Activate>
        <ActivateTitle>Activate Windows</ActivateTitle>
        Go to Settings to activate Windows.
      </Activate>
      <Mark>
        <MarkArabic>مستقل</MarkArabic>
        mostaql.com
      </Mark>
    </Screen>
  );
}
